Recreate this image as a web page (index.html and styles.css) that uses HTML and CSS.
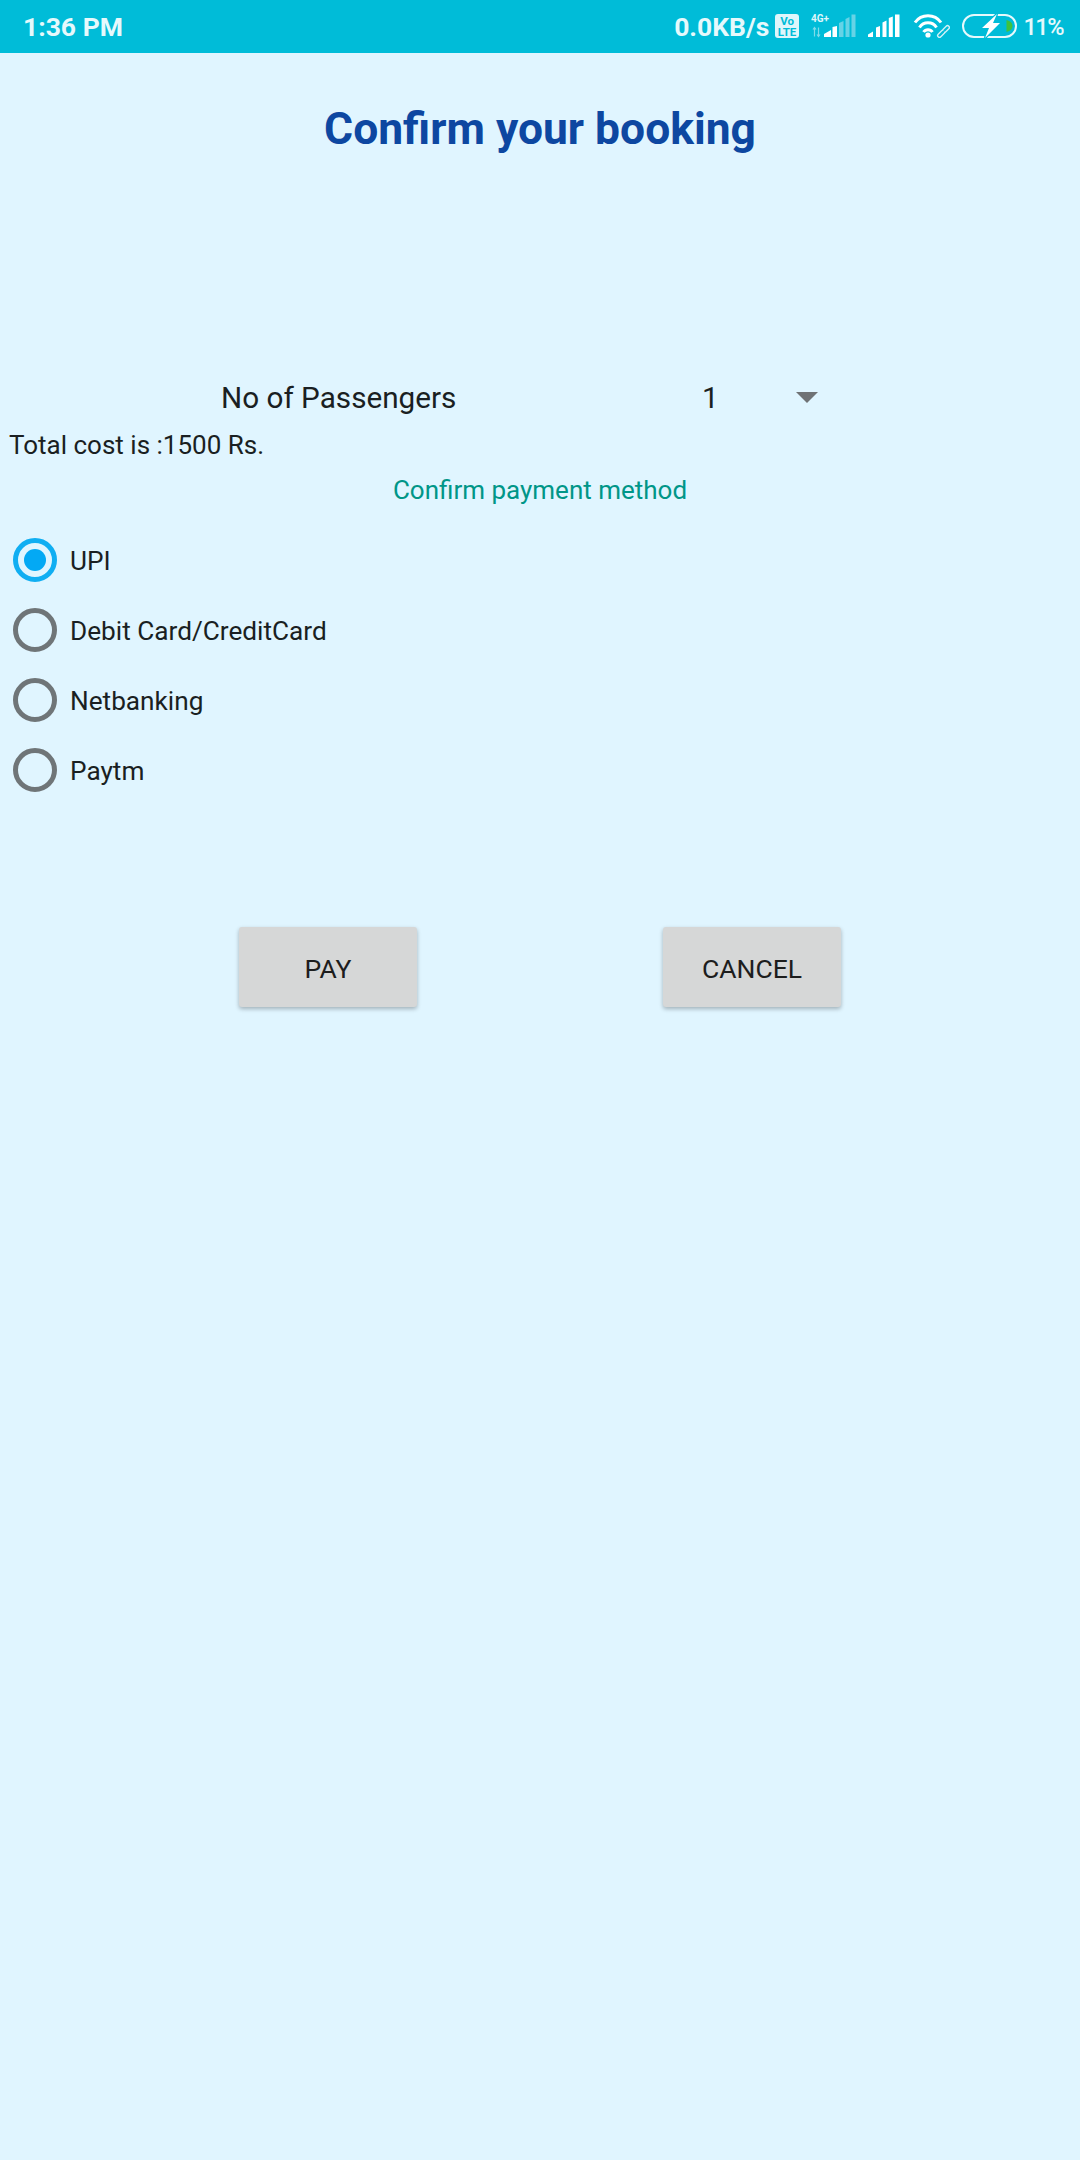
FILE: index.html
```html
<!DOCTYPE html>
<html lang="en">
<head>
<meta charset="utf-8">
<title>Confirm your booking</title>
<link rel="stylesheet" href="styles.css">
</head>
<body>
<header class="status">
  <span class="time">1:36 PM</span>
  <div class="status-right">
    <span class="speed">0.0KB/s</span>
    <svg class="ic ic-volte" width="24" height="24" viewBox="0 0 24 24">
      <rect width="24" height="24" rx="3" fill="#dff6fb"/>
      <text x="12" y="10.500" class="volte-txt" text-anchor="middle">Vo</text>
      <text x="12" y="21.500" class="volte-txt" text-anchor="middle">LTE</text>
    </svg>
    <svg class="ic ic-sig1" width="46" height="24" viewBox="0 0 46 24">
      <text x="0" y="8" class="g4">4G+</text>
      <path d="M3.500 13.500v9M2 15.500l1.500-2 1.500 2M7.500 13.500v9M6 20.500l1.500 2 1.500-2" stroke="#7fdbe9" stroke-width="1.200" fill="none"/>
      <path d="M13 23v-3l7-4v7zM21.500 23v-10l4.500-1v11z" fill="#fff"/>
      <path d="M28 23v-14l4.500-2v16zM34.500 23v-18l4-2v20zM40.500 23v-22.500h4v22.500z" fill="#66d3e6"/>
    </svg>
    <svg class="ic ic-sig2" width="32" height="24" viewBox="0 0 32 24">
      <path d="M0 23v-2.500l5-3v5.500zM8 23v-9.500l4-1.500v11zM14.500 23v-14.500l4-2v16.500zM20.800 23v-19l4-1.500v20.500zM27 23v-22.500h4.500v22.500z" fill="#fff"/>
    </svg>
    <svg class="ic ic-wifi" width="37" height="24" viewBox="0 0 37 24">
      <path d="M2 8.500A16 16 0 0 1 28 8.500M6.500 13.500A10 10 0 0 1 23.500 13.500M10.500 18A5.500 5.500 0 0 1 19.500 18" stroke="#fff" stroke-width="3" fill="none"/>
      <circle cx="15" cy="21" r="2.600" fill="#fff"/>
      <path d="M26.500 21.500l3.500-3.500M31.500 16.500l3-3" stroke="#d5f2f7" stroke-width="5" stroke-linecap="round" fill="none"/>
      <path d="M26.500 21.500l3.500-3.500M31.500 16.500l3-3" stroke="#00bcd8" stroke-width="2.400" stroke-linecap="round" fill="none"/>
    </svg>
    <svg class="ic ic-batt" width="55" height="24" viewBox="0 0 55 24">
      <rect x="1" y="1" width="53" height="22" rx="11" fill="none" stroke="#e6f9fc" stroke-width="2"/>
      <path d="M44.500 6Q50.500 7.500 50.500 12Q50.500 16.500 44.500 18z" fill="#3fc23f"/>
      <path d="M35 0L20 14h7l-4 10L38 9h-7z" fill="#fff" stroke="#00bcd8" stroke-width="2.500" paint-order="stroke"/>
    </svg>
    <span class="batt-pct">11%</span>
  </div>
</header>

<main class="page">
  <h1 class="title">Confirm your booking</h1>

  <div class="spinner-row">
    <span class="spinner-label">No of Passengers</span>
    <span class="spinner-value">1</span>
    <span class="spinner-arrow"></span>
  </div>

  <p class="cost">Total cost is :1500 Rs.</p>
  <p class="method">Confirm payment method</p>

  <div class="radios">
    <label class="radio-row"><span class="radio radio-on"></span><span class="radio-text">UPI</span></label>
    <label class="radio-row"><span class="radio"></span><span class="radio-text">Debit Card/CreditCard</span></label>
    <label class="radio-row"><span class="radio"></span><span class="radio-text">Netbanking</span></label>
    <label class="radio-row"><span class="radio"></span><span class="radio-text">Paytm</span></label>
  </div>

  <div class="actions">
    <button class="btn" type="button">PAY</button>
    <button class="btn" type="button">CANCEL</button>
  </div>
</main>
</body>
</html>
```
FILE: styles.css
```css
* { box-sizing: border-box; }
html, body { margin: 0; padding: 0; }
body {
  width: 1080px;
  height: 2160px;
  background: #e0f5ff;
  font-family: Roboto, "Liberation Sans", sans-serif;
  color: #1a1f22;
  overflow: hidden;
}
.status {
  height: 53px;
  background: #00bcd8;
  display: flex;
  align-items: center;
  justify-content: space-between;
  padding: 0 17px 0 23px;
  color: #e6f9fc;
  font-weight: 700;
}
.time { font-size: 26.500px; }
.status-right { display: flex; align-items: center; }
.speed { font-size: 26.500px; }
.ic { margin-bottom: 2px; }
.ic-volte { margin-left: 6px; }
.volte-txt { font: 700 11.500px Roboto, sans-serif; fill: #00bcd8; }
.g4 { font: 700 10px Roboto, sans-serif; fill: #dff6fb; }
.ic-sig1 { margin-left: 12px; }
.ic-sig2 { margin-left: 11px; }
.ic-wifi { margin-left: 13px; }
.ic-batt { margin-left: 12px; }
.batt-pct { font-size: 23.500px; font-weight: 500; letter-spacing: -1.500px; margin-left: 6px; }

.title {
  margin: 51px 0 0;
  text-align: center;
  font-size: 44.400px;
  line-height: 50px;
  font-weight: 700;
  color: #0d47a1;
}
.spinner-row {
  display: flex;
  align-items: center;
  height: 40px;
  margin-top: 223px;
  padding-left: 221px;
  font-size: 29.700px;
}
.spinner-label { width: 481px; }
.spinner-value { width: 94px; }
.spinner-arrow {
  width: 0;
  height: 0;
  border-left: 11px solid transparent;
  border-right: 11px solid transparent;
  border-top: 11px solid #6f7275;
}
.cost {
  margin: 9px 0 0 9px;
  font-size: 26px;
  line-height: 38px;
}
.method {
  margin: 7px 0 0;
  text-align: center;
  font-size: 26px;
  line-height: 38px;
  color: #009688;
}
.radios {
  display: flex;
  flex-direction: column;
  margin-top: 16px;
  padding-left: 13px;
}
.radio-row {
  display: flex;
  align-items: center;
  height: 70px;
  font-size: 26.200px;
}
.radio-text { padding-top: 1px; }
.radio {
  width: 44px;
  height: 44px;
  border: 5px solid #6f7578;
  border-radius: 50%;
  display: flex;
  align-items: center;
  justify-content: center;
  margin-right: 13px;
}
.radio-on { border-color: #10aef2; }
.radio-on::after {
  content: "";
  width: 22px;
  height: 22px;
  border-radius: 50%;
  background: #03a9f4;
}
.actions {
  display: flex;
  margin-top: 122px;
  padding-left: 239px;
  gap: 246px;
}
.btn {
  width: 178px;
  height: 80px;
  border: 0;
  border-radius: 3px;
  background: #d6d7d7;
  color: #1d1d1d;
  font-family: Roboto, sans-serif;
  font-size: 26.500px;
  font-weight: 400;
  box-shadow: 0 2px 4px rgba(0, 0, 0, .28);
  padding: 2px 0 0;
}
```
